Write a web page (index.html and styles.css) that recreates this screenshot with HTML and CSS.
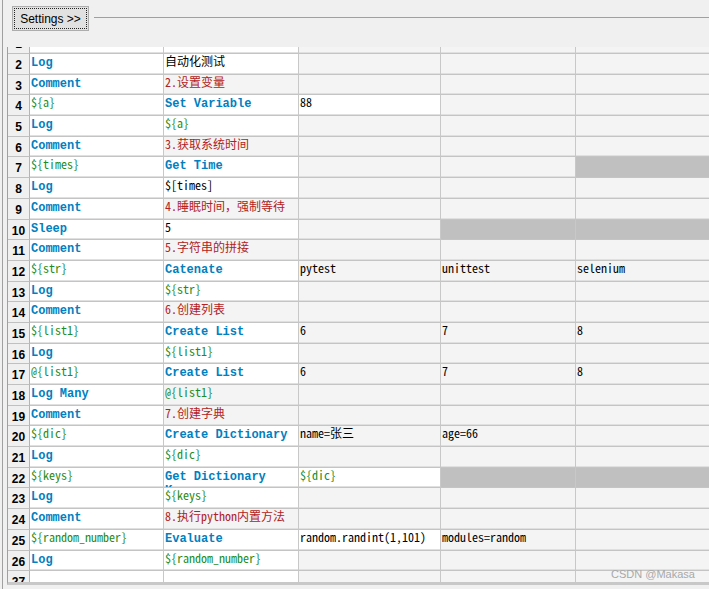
FILE: index.html
```html
<!DOCTYPE html>
<html lang="zh">
<head>
<meta charset="utf-8">
<title>RIDE grid</title>
<link rel="stylesheet" href="styles.css">
</head>
<body>
<div class="app">
  <div class="toolbar">
    <button class="btn">Settings &gt;&gt;</button>
    <div class="rule"></div>
  </div>
  <div class="sheet">
    <div class="grid">
      <div class="h">1</div><div class="c w"></div><div class="c w"></div><div class="c"></div><div class="c"></div><div class="c"></div>
      <div class="h">2</div><div class="c w kw">Log</div><div class="c w">自动化测试</div><div class="c"></div><div class="c"></div><div class="c"></div>
      <div class="h">3</div><div class="c w kw">Comment</div><div class="c cm">2.设置变量</div><div class="c"></div><div class="c"></div><div class="c"></div>
      <div class="h">4</div><div class="c w var">${a}</div><div class="c w kw">Set Variable</div><div class="c w">88</div><div class="c"></div><div class="c"></div>
      <div class="h">5</div><div class="c w kw">Log</div><div class="c w var">${a}</div><div class="c"></div><div class="c"></div><div class="c"></div>
      <div class="h">6</div><div class="c w kw">Comment</div><div class="c cm">3.获取系统时间</div><div class="c"></div><div class="c"></div><div class="c"></div>
      <div class="h">7</div><div class="c w var">${times}</div><div class="c w kw">Get Time</div><div class="c"></div><div class="c"></div><div class="c d"></div>
      <div class="h">8</div><div class="c w kw">Log</div><div class="c w">$[times]</div><div class="c"></div><div class="c"></div><div class="c"></div>
      <div class="h">9</div><div class="c w kw">Comment</div><div class="c cm">4.睡眠时间，强制等待</div><div class="c"></div><div class="c"></div><div class="c"></div>
      <div class="h">10</div><div class="c w kw">Sleep</div><div class="c w">5</div><div class="c"></div><div class="c d"></div><div class="c d"></div>
      <div class="h">11</div><div class="c w kw">Comment</div><div class="c cm">5.字符串的拼接</div><div class="c"></div><div class="c"></div><div class="c"></div>
      <div class="h">12</div><div class="c w var">${str}</div><div class="c w kw">Catenate</div><div class="c">pytest</div><div class="c">unittest</div><div class="c">selenium</div>
      <div class="h">13</div><div class="c w kw">Log</div><div class="c w var">${str}</div><div class="c"></div><div class="c"></div><div class="c"></div>
      <div class="h">14</div><div class="c w kw">Comment</div><div class="c cm">6.创建列表</div><div class="c"></div><div class="c"></div><div class="c"></div>
      <div class="h">15</div><div class="c w var">${list1}</div><div class="c w kw">Create List</div><div class="c">6</div><div class="c">7</div><div class="c">8</div>
      <div class="h">16</div><div class="c w kw">Log</div><div class="c w var">${list1}</div><div class="c"></div><div class="c"></div><div class="c"></div>
      <div class="h">17</div><div class="c w var">@{list1}</div><div class="c w kw">Create List</div><div class="c">6</div><div class="c">7</div><div class="c">8</div>
      <div class="h">18</div><div class="c w kw">Log Many</div><div class="c var">@{list1}</div><div class="c"></div><div class="c"></div><div class="c"></div>
      <div class="h">19</div><div class="c w kw">Comment</div><div class="c cm">7.创建字典</div><div class="c"></div><div class="c"></div><div class="c"></div>
      <div class="h">20</div><div class="c w var">${dic}</div><div class="c w kw">Create Dictionary</div><div class="c">name=张三</div><div class="c">age=66</div><div class="c"></div>
      <div class="h">21</div><div class="c w kw">Log</div><div class="c w var">${dic}</div><div class="c"></div><div class="c"></div><div class="c"></div>
      <div class="h">22</div><div class="c w var">${keys}</div><div class="c w kw clip">Get Dictionary Keys</div><div class="c w var">${dic}</div><div class="c d"></div><div class="c d"></div>
      <div class="h">23</div><div class="c w kw">Log</div><div class="c w var">${keys}</div><div class="c"></div><div class="c"></div><div class="c"></div>
      <div class="h">24</div><div class="c w kw">Comment</div><div class="c cm">8.执行python内置方法</div><div class="c"></div><div class="c"></div><div class="c"></div>
      <div class="h">25</div><div class="c w var">${random_number}</div><div class="c w kw">Evaluate</div><div class="c w">random.randint(1,101)</div><div class="c">modules=random</div><div class="c"></div>
      <div class="h">26</div><div class="c w kw">Log</div><div class="c w var">${random_number}</div><div class="c"></div><div class="c"></div><div class="c"></div>
      <div class="h">27</div><div class="c w"></div><div class="c w"></div><div class="c"></div><div class="c"></div><div class="c"></div>
    </div>
  </div>
  <div class="mark">CSDN @Makasa</div>
</div>
</body>
</html>
```
FILE: styles.css
```css
* { box-sizing: border-box; }
html, body { margin: 0; padding: 0; }
body {
  width: 709px;
  height: 589px;
  overflow: hidden;
  background: #f0f0f0;
  font-family: "Liberation Sans", Arial, sans-serif;
}
.app {
  position: relative;
  margin-left: 2px;
  height: 589px;
  border-left: 1px solid #a0a0a0;
  display: flex;
  flex-direction: column;
}
.toolbar {
  display: flex;
  align-items: flex-start;
  height: 47px;
  padding: 6px 0 0 9px;
  flex: none;
}
.btn {
  width: 77px;
  height: 25px;
  padding: 0;
  border: 1px solid #adadad;
  background: #e1e1e1;
  color: #000;
  font: 12px "Liberation Sans", Arial, sans-serif;
  outline: 1px dotted #222;
  outline-offset: -3px;
}
.rule {
  flex: 1;
  height: 1px;
  margin: 11px 0 0 5px;
  background: #a0a0a0;
}
.sheet {
  margin-left: 4px;
  height: 538px;
  border-left: 1px solid #a0a0a0;
  border-bottom: 3px solid #c8c8c8;
  overflow: hidden;
  flex: none;
}
.grid {
  display: grid;
  grid-template-columns: 22px 134px 135px 142px 135px 200px;
  grid-auto-rows: 20.7px;
  margin-top: -13.7px;
}
.h {
  background: #f0f0f0;
  border-right: 1px solid #b4b4b4;
  border-bottom: 1px solid #c0c0c0;
  font: bold 12px/14px "Liberation Sans", Arial, sans-serif;
  color: #000;
  text-align: center;
  padding-top: 4px;
  overflow: hidden;
}
.c {
  background: #f4f4f4;
  border-right: 1px solid #c8c8c8;
  border-bottom: 1px solid #c4c4c4;
  box-shadow: inset 0 -1px 0 #e0e0e0;
  padding: 1px 0 0 1px;
  color: #000;
  white-space: nowrap;
  font: 12px/12px "Noto Sans Mono CJK SC", "Liberation Mono", "Noto Sans CJK SC", monospace;
}
.w { background: #fff; }
.d { background: #c0c0c0; box-shadow: none; }
.kw {
  color: #0080c0;
  font: bold 12px/14px "Liberation Mono", "Noto Sans CJK SC", monospace;
  padding-top: 2px;
}
.clip {
  white-space: normal;
  overflow: hidden;
}
.var { color: #228b22; }
.cm { color: #b22222; }
.mark {
  position: absolute;
  left: 608px;
  top: 568px;
  font: 11px "Liberation Sans", Arial, sans-serif;
  color: #a8a8a8;
}
```
